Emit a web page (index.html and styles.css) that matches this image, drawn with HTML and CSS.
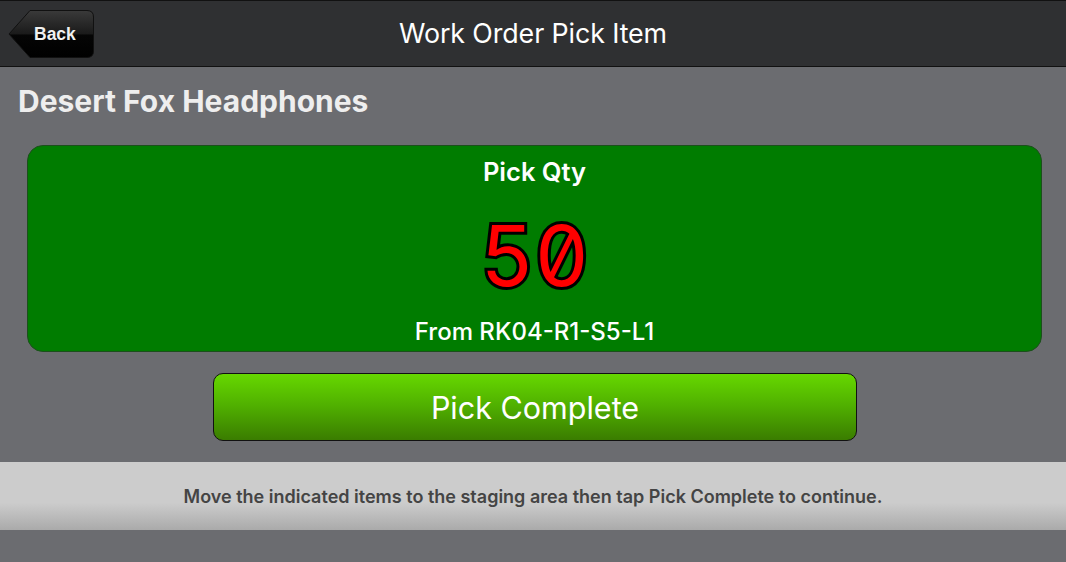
FILE: index.html
```html
<!DOCTYPE html>
<html>
<head>
<meta charset="utf-8">
<link rel="stylesheet" href="styles.css">
</head>
<body>
<div class="app">
  <header class="topbar">
    <a class="back-btn">
      <svg class="back-shape" width="86" height="48" viewBox="0 0 86 48">
        <defs>
          <linearGradient id="bg" x1="0" y1="0" x2="0" y2="1">
            <stop offset="0" stop-color="#3a3a3a"/>
            <stop offset="0.5" stop-color="#1a1a1a"/>
            <stop offset="0.52" stop-color="#050505"/>
            <stop offset="1" stop-color="#000"/>
          </linearGradient>
        </defs>
        <path d="M22 0.5 H79 Q85.5 0.5 85.5 7 V41 Q85.5 47.5 79 47.5 H22 L1 24 Z" fill="url(#bg)" stroke="#111" stroke-width="1"/>
      </svg>
      <span class="back-label">Back</span>
    </a>
    <h1 class="title">Work Order Pick Item</h1>
  </header>
  <main class="content">
    <h2 class="item-name">Desert Fox Headphones</h2>
    <section class="pick-card">
      <div class="pick-label">Pick Qty</div>
      <div class="pick-qty">50</div>
      <div class="pick-from">From RK04-R1-S5-L1</div>
    </section>
    <div class="actions">
      <button class="complete-btn">Pick Complete</button>
    </div>
  </main>
  <footer class="hint">Move the indicated items to the staging area then tap Pick Complete to continue.</footer>
</div>
</body>
</html>
```

FILE: styles.css
```css
html, body {
  margin: 0;
  padding: 0;
  height: 100%;
}
body {
  background: #6b6c70;
  font-family: Inter, "Noto Sans", sans-serif;
  overflow: hidden;
}
.app {
  display: flex;
  flex-direction: column;
}
.topbar {
  height: 65px;
  background: #2f3032;
  border-top: 1px solid #111;
  border-bottom: 1px solid #111;
  display: flex;
  align-items: center;
  justify-content: center;
  position: relative;
}
.back-btn {
  position: absolute;
  left: 8px;
  top: 9px;
  width: 86px;
  height: 48px;
  display: block;
}
.back-shape {
  position: absolute;
  left: 0;
  top: 0;
}
.back-label {
  position: absolute;
  left: 26px;
  top: 0;
  line-height: 48px;
  font-family: "Liberation Sans", Arial, sans-serif;
  font-weight: bold;
  font-size: 17.5px;
  color: #f0f0f0;
}
.title {
  margin: 0 0 2px 0;
  font-size: 26.8px;
  font-weight: 400;
  color: #fff;
  letter-spacing: -0.1px;
}
.content {
  padding: 16px 24px 0 27px;
  display: flex;
  flex-direction: column;
}
.item-name {
  margin: 0 0 0 -9px;
  font-size: 30px;
  font-weight: 700;
  color: #eeeeee;
  line-height: 36px;
}
.pick-card {
  margin-top: 26px;
  height: 205px;
  background: #007c00;
  border: 1px solid #1c4f1c;
  border-radius: 16px;
  display: flex;
  flex-direction: column;
  align-items: center;
  color: #fff;
}
.pick-label {
  margin-top: 11px;
  font-size: 25.5px;
  font-weight: 600;
  line-height: 30px;
}
.pick-qty {
  margin-top: 24px;
  font-family: Inter, sans-serif;
  font-feature-settings: "zero" 1, "tnum" 1;
  font-size: 84px;
  font-weight: 400;
  line-height: 90px;
  color: #ff0000;
  -webkit-text-stroke: 6px #000;
  paint-order: stroke fill;
}
.pick-from {
  margin-top: 16px;
  font-size: 24px;
  font-weight: 500;
  line-height: 30px;
}
.actions {
  display: flex;
  justify-content: center;
  padding-top: 21px;
  margin-left: 1px;
}
.complete-btn {
  width: 644px;
  height: 68px;
  border: 1px solid #111;
  border-radius: 10px;
  background: linear-gradient(to bottom, #66d800 0%, #4fae00 50%, #3a7c00 100%);
  color: #fff;
  font-family: Inter, "Noto Sans", sans-serif;
  font-size: 30.5px;
  font-weight: 400;
  padding: 0;
}
.hint {
  margin-top: 21px;
  height: 68px;
  background: linear-gradient(to bottom, #cccccc 0%, #cccccc 60%, #aaaaaa 100%);
  color: #444;
  font-size: 18px;
  font-weight: 600;
  display: flex;
  align-items: center;
  justify-content: center;
}
```
